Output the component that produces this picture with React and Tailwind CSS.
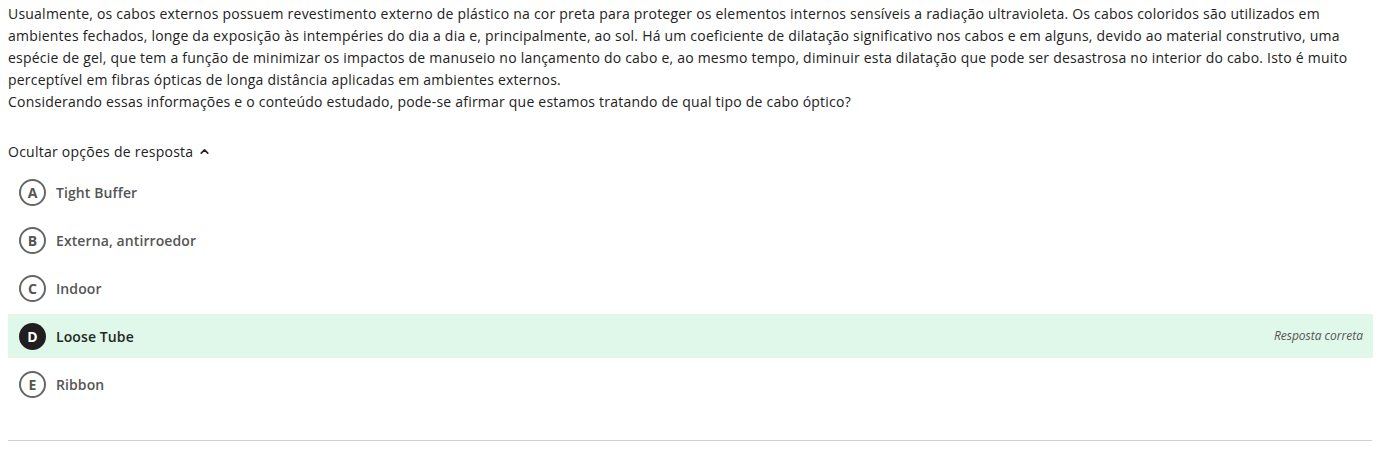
import { ChevronUp } from "lucide-react";

const OPTIONS = [
  { letter: "A", label: "Tight Buffer" },
  { letter: "B", label: "Externa, antirroedor" },
  { letter: "C", label: "Indoor" },
  { letter: "D", label: "Loose Tube", correct: true },
  { letter: "E", label: "Ribbon" },
];

function Option({ letter, label, correct }) {
  return (
    <div className={`flex items-center h-11 pl-[11px] pr-[10px] ${correct ? "bg-[#dff8ea]" : ""}`}>
      <span
        className={`flex items-center justify-center w-[27px] h-[27px] rounded-full text-[14px] font-bold ${
          correct ? "bg-[#1f1f1f] text-white" : "border-2 border-[#666] text-[#555]"
        }`}
      >
        {letter}
      </span>
      <span className={`ml-[10px] text-[14px] font-semibold tracking-[0.1px] ${correct ? "text-[#1f2a24]" : "text-[#555]"}`}>{label}</span>
      {correct && (
        <span className="ml-auto text-[12px] italic text-[#555]">Resposta correta</span>
      )}
    </div>
  );
}

export default function App() {
  return (
    <div className="bg-white px-2 pt-[3px] text-[#222]" style={{ fontFamily: '"Open Sans", sans-serif' }}>
      <p className="text-[14px] tracking-[0.22px] leading-[22px] whitespace-nowrap">
        Usualmente, os cabos externos possuem revestimento externo de plástico na cor preta para proteger os elementos internos sensíveis a radiação ultravioleta. Os cabos coloridos são utilizados em
        <br />
        ambientes fechados, longe da exposição às intempéries do dia a dia e, principalmente, ao sol. Há um coeficiente de dilatação significativo nos cabos e em alguns, devido ao material construtivo, uma
        <br />
        espécie de gel, que tem a função de minimizar os impactos de manuseio no lançamento do cabo e, ao mesmo tempo, diminuir esta dilatação que pode ser desastrosa no interior do cabo. Isto é muito
        <br />
        perceptível em fibras ópticas de longa distância aplicadas em ambientes externos.
        <br />
        Considerando essas informações e o conteúdo estudado, pode-se afirmar que estamos tratando de qual tipo de cabo óptico?
      </p>

      <button className="mt-[27px] flex items-center gap-1 h-[22px] text-[14px] tracking-[0.25px] text-[#222]">
        Ocultar opções de resposta
        <ChevronUp size={13} strokeWidth={3} className="ml-[1px]" />
      </button>

      <div className="mt-[8px] flex flex-col gap-1">
        {OPTIONS.map((o) => (
          <Option key={o.letter} {...o} />
        ))}
      </div>

      <div className="mt-[34px] border-t border-[#d0d0d0] w-[1364px]" />
    </div>
  );
}
